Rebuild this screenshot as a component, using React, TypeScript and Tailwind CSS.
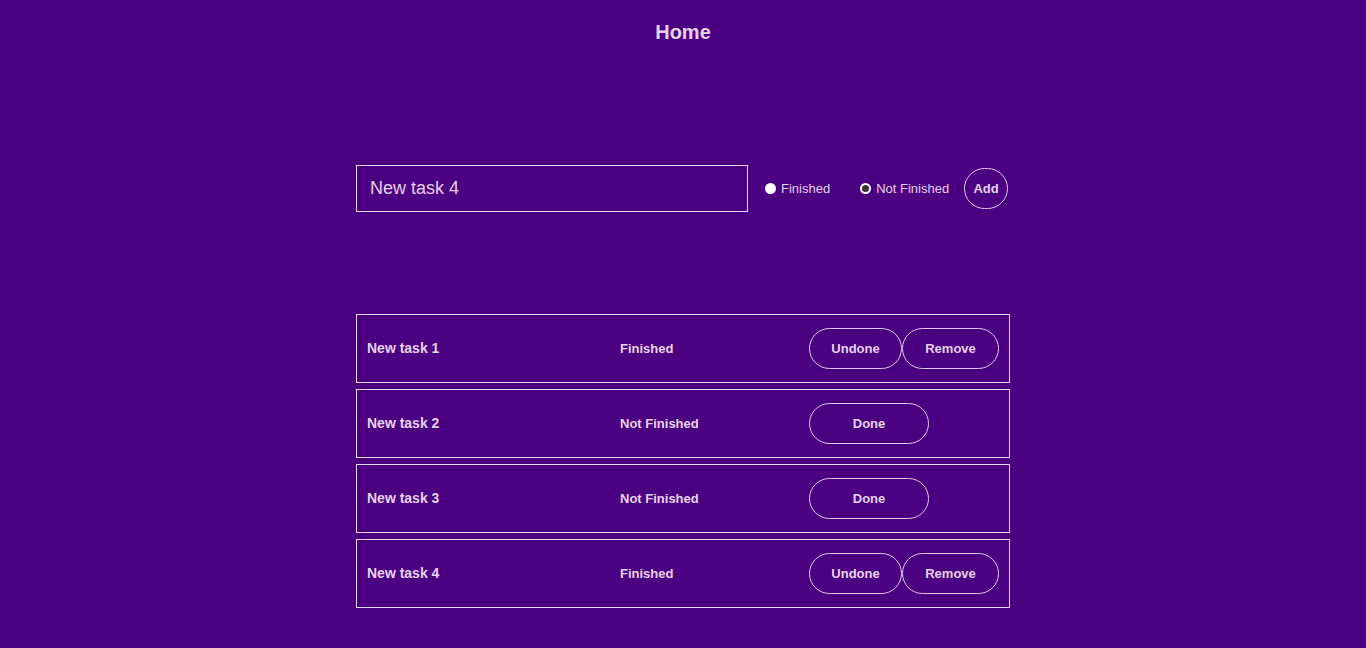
import React from "react";

const tasks = [
  { name: "New task 1", done: true },
  { name: "New task 2", done: false },
  { name: "New task 3", done: false },
  { name: "New task 4", done: true },
];

const btn =
  "h-[41px] rounded-full border border-[#e2c6ee] bg-transparent text-[13px] font-bold text-[#e6d3f0]";

export default function App() {
  return (
    <div
      className="min-h-[648px] w-full bg-[#4b0082] text-[#e6d3f0]"
      style={{ fontFamily: '"Liberation Sans", Arial, sans-serif' }}
    >
      <h1 className="pt-[20px] text-center text-[20px] font-bold leading-[24px]">Home</h1>
      <div className="mx-auto w-[654px]">
        <div className="mt-[121px] flex items-center">
          <div className="flex h-[47px] w-[392px] items-center border border-[#ead9f2] pl-[13px] text-[18px]">
            New task 4
          </div>
          <label className="ml-[17px] flex items-center text-[13px]">
            <span className="mr-[5px] inline-block h-[11px] w-[11px] rounded-full bg-white" />
            Finished
          </label>
          <label className="ml-[30px] flex items-center text-[13px]">
            <span className="mr-[5px] flex h-[11px] w-[11px] items-center justify-center rounded-full bg-white">
              <span className="h-[7px] w-[7px] rounded-full bg-[#333333]" />
            </span>
            Not Finished
          </label>
          <button className="ml-[15px] h-[41px] w-[44px] rounded-full border border-[#e2c6ee] text-[13px] font-bold text-[#e6d3f0]">
            Add
          </button>
        </div>
        <div className="mt-[102px] flex flex-col gap-[6px]">
          {tasks.map((t) => (
            <div
              key={t.name}
              className="flex h-[69px] items-center border border-[#ead9f2] pl-[10px]"
            >
              <div className="w-[253px] text-[14px] font-bold">{t.name}</div>
              <div className="w-[189px] text-[13px] font-bold">
                {t.done ? "Finished" : "Not Finished"}
              </div>
              {t.done ? (
                <div className="flex">
                  <button className={`${btn} w-[93px]`}>Undone</button>
                  <button className={`${btn} w-[97px]`}>Remove</button>
                </div>
              ) : (
                <button className={`${btn} w-[120px]`}>Done</button>
              )}
            </div>
          ))}
        </div>
      </div>
    </div>
  );
}
